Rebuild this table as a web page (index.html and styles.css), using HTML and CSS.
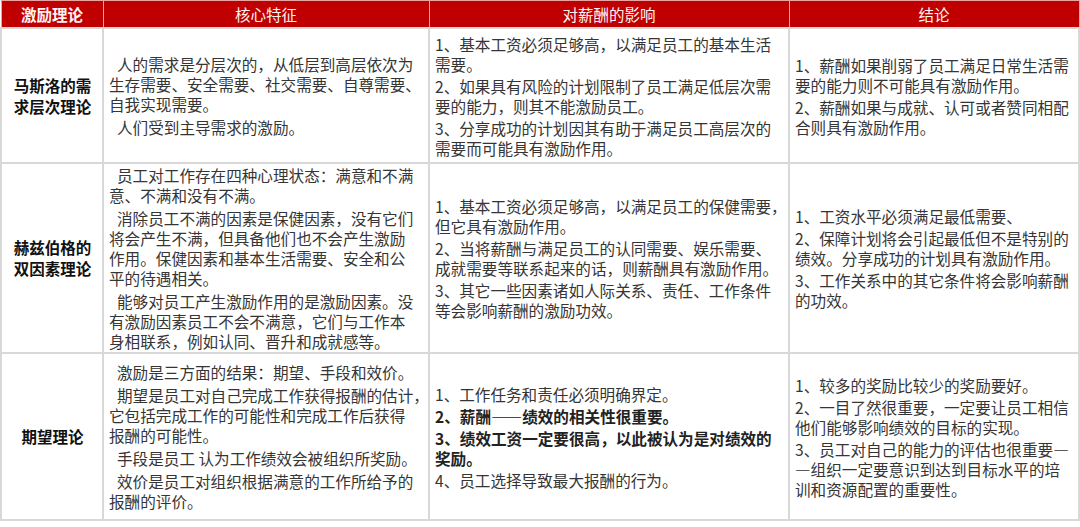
FILE: index.html
```html
<!DOCTYPE html>
<html lang="zh-CN">
<head>
<meta charset="utf-8">
<title>激励理论</title>
<link rel="stylesheet" href="styles.css">
</head>
<body>
<table class="grid">
  <colgroup>
    <col class="c1"><col class="c2"><col class="c3"><col class="c4">
  </colgroup>
  <thead>
    <tr class="head">
      <th class="h-bold">激励理论</th>
      <th>核心特征</th>
      <th>对薪酬的影响</th>
      <th>结论</th>
    </tr>
  </thead>
  <tbody>
    <tr class="r1">
      <td class="name">马斯洛的需<br>求层次理论</td>
      <td class="txt ind">
        <p>人的需求是分层次的，从低层到高层依次为<br>生存需要、安全需要、社交需要、自尊需要、<br>自我实现需要。</p>
        <p>人们受到主导需求的激励。</p>
      </td>
      <td class="txt">
        <p>1、基本工资必须足够高，以满足员工的基本生活<br>需要。</p>
        <p>2、如果具有风险的计划限制了员工满足低层次需<br>要的能力，则其不能激励员工。</p>
        <p>3、分享成功的计划因其有助于满足员工高层次的<br>需要而可能具有激励作用。</p>
      </td>
      <td class="txt">
        <p>1、薪酬如果削弱了员工满足日常生活需<br>要的能力则不可能具有激励作用。</p>
        <p>2、薪酬如果与成就、认可或者赞同相配<br>合则具有激励作用。</p>
      </td>
    </tr>
    <tr class="r2">
      <td class="name">赫兹伯格的<br>双因素理论</td>
      <td class="txt ind">
        <p>员工对工作存在四种心理状态：满意和不满<br>意、不满和没有不满。</p>
        <p>消除员工不满的因素是保健因素，没有它们<br>将会产生不满，但具备他们也不会产生激励<br>作用。保健因素和基本生活需要、安全和公<br>平的待遇相关。</p>
        <p>能够对员工产生激励作用的是激励因素。没<br>有激励因素员工不会不满意，它们与工作本<br>身相联系，例如认同、晋升和成就感等。</p>
      </td>
      <td class="txt">
        <p>1、基本工资必须足够高，以满足员工的保健需要，<br>但它具有激励作用。</p>
        <p>2、当将薪酬与满足员工的认同需要、娱乐需要、<br>成就需要等联系起来的话，则薪酬具有激励作用。</p>
        <p>3、其它一些因素诸如人际关系、责任、工作条件<br>等会影响薪酬的激励功效。</p>
      </td>
      <td class="txt">
        <p>1、工资水平必须满足最低需要、</p>
        <p>2、保障计划将会引起最低但不是特别的<br>绩效。分享成功的计划具有激励作用。</p>
        <p>3、工作关系中的其它条件将会影响薪酬<br>的功效。</p>
      </td>
    </tr>
    <tr class="r3">
      <td class="name">期望理论</td>
      <td class="txt ind">
        <p>激励是三方面的结果：期望、手段和效价。</p>
        <p>期望是员工对自己完成工作获得报酬的估计，<br>它包括完成工作的可能性和完成工作后获得<br>报酬的可能性。</p>
        <p>手段是员工 认为工作绩效会被组织所奖励。</p>
        <p>效价是员工对组织根据满意的工作所给予的<br>报酬的评价。</p>
      </td>
      <td class="txt">
        <p>1、工作任务和责任必须明确界定。</p>
        <p class="strong">2、薪酬——绩效的相关性很重要。</p>
        <p class="strong">3、绩效工资一定要很高，以此被认为是对绩效的<br>奖励。</p>
        <p>4、员工选择导致最大报酬的行为。</p>
      </td>
      <td class="txt">
        <p>1、较多的奖励比较少的奖励要好。</p>
        <p>2、一目了然很重要，一定要让员工相信<br>他们能够影响绩效的目标的实现。</p>
        <p>3、员工对自己的能力的评估也很重要—<br>—组织一定要意识到达到目标水平的培<br>训和资源配置的重要性。</p>
      </td>
    </tr>
  </tbody>
</table>
</body>
</html>
```

FILE: styles.css
```css
html, body {
  margin: 0;
  padding: 0;
  background: #ffffff;
}

body {
  font-family: "Noto Sans CJK SC", "Noto Sans", "Liberation Sans", sans-serif;
  color: #353535;
}

.grid {
  border-collapse: collapse;
  table-layout: fixed;
  width: 1078px;
}

.c1 { width: 102px; }
.c2 { width: 326px; }
.c3 { width: 360px; }
.c4 { width: 290px; }

.head th {
  height: 26px;
  padding: 0;
  background: #c00000;
  color: #fff4f4;
  font-size: 15.5px;
  font-weight: 400;
  line-height: 20px;
  text-align: center;
  vertical-align: middle;
  border: 1.5px solid #e9a3a3;
}

.head th.h-bold {
  font-weight: 700;
}

tbody td {
  border: 2px solid #d8d8d8;
  vertical-align: middle;
  padding: 0 4px 0 5px;
  overflow: visible;
}

.r1 td { height: 133px; }
.r2 td { height: 188px; }
.r3 td { height: 165px; }

.name {
  text-align: center;
  font-weight: 700;
  font-size: 15.5px;
  line-height: 21px;
  color: #111111;
}

.txt {
  font-size: 15.6px;
  line-height: 20px;
  white-space: nowrap;
}

.txt p {
  margin: 0 0 2px 0;
}

.txt p:last-child {
  margin-bottom: 0;
}

.ind p {
  text-indent: 8px;
  margin-bottom: 3px;
}

.strong {
  font-weight: 700;
  color: #222222;
}
```
